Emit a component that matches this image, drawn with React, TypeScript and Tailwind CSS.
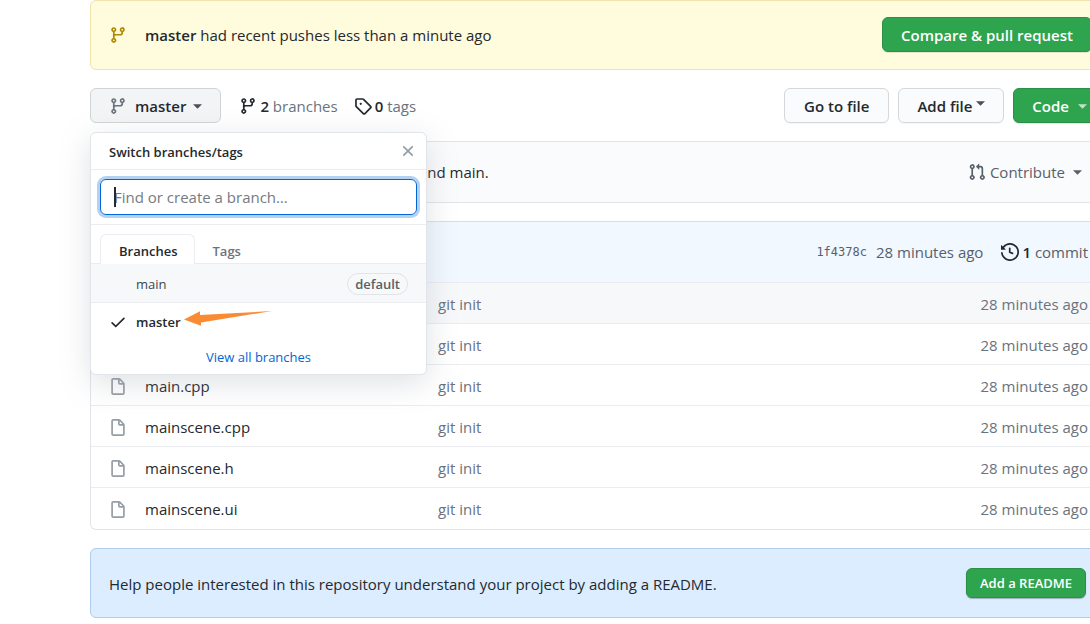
import React from "react";

const ICONS = {
  branch:
    "M11.75 2.5a.75.75 0 100 1.5.75.75 0 000-1.5zm-2.25.75a2.25 2.25 0 113 2.122V6A2.5 2.5 0 0110 8.5H6a1 1 0 00-1 1v1.128a2.251 2.251 0 11-1.5 0V5.372a2.25 2.25 0 111.5 0v1.836A2.492 2.492 0 016 7h4a1 1 0 001-1v-.628A2.25 2.25 0 019.5 3.25zM4.25 12a.75.75 0 100 1.5.75.75 0 000-1.5zM3.5 3.25a.75.75 0 111.5 0 .75.75 0 01-1.5 0z",
  tag: "M2.5 7.775V2.75a.25.25 0 01.25-.25h5.025a.25.25 0 01.177.073l6.25 6.25a.25.25 0 010 .354l-5.025 5.025a.25.25 0 01-.354 0l-6.25-6.25a.25.25 0 01-.073-.177zm-1.5 0V2.75C1 1.784 1.784 1 2.75 1h5.025c.464 0 .91.184 1.238.513l6.25 6.25a1.75 1.75 0 010 2.474l-5.026 5.026a1.75 1.75 0 01-2.474 0l-6.25-6.25A1.75 1.75 0 011 7.775zM6 5a1 1 0 100 2 1 1 0 000-2z",
  pull: "M7.177 3.073L9.573.677A.25.25 0 0110 .854v4.792a.25.25 0 01-.427.177L7.177 3.427a.25.25 0 010-.354zM3.75 2.5a.75.75 0 100 1.5.75.75 0 000-1.5zm-2.25.75a2.25 2.25 0 113 2.122v5.256a2.251 2.251 0 11-1.5 0V5.372A2.25 2.25 0 011.5 3.25zM11 2.5h-1V4h1a1 1 0 011 1v5.628a2.251 2.251 0 101.5 0V5A2.5 2.5 0 0011 2.5zm1 10.25a.75.75 0 111.5 0 .75.75 0 01-1.5 0zM3.75 12a.75.75 0 100 1.5.75.75 0 000-1.5z",
  history:
    "M1.643 3.143L.427 1.927A.25.25 0 000 2.104V5.75c0 .138.112.25.25.25h3.646a.25.25 0 00.177-.427L2.715 4.215a6.5 6.5 0 11-1.18 4.458.75.75 0 10-1.493.154 8.001 8.001 0 101.6-5.684zM7.75 4a.75.75 0 01.75.75v2.992l2.028.812a.75.75 0 01-.557 1.392l-2.5-1A.75.75 0 017 8.25v-3.5A.75.75 0 017.75 4z",
  file: "M3.75 1.5a.25.25 0 00-.25.25v11.5c0 .138.112.25.25.25h8.5a.25.25 0 00.25-.25V6H9.75A1.75 1.75 0 018 4.25V1.5H3.75zm5.75.56v2.19c0 .138.112.25.25.25h2.19L9.5 2.06zM2 1.75C2 .784 2.784 0 3.75 0h5.086c.464 0 .909.184 1.237.513l3.414 3.414c.329.328.513.773.513 1.237v8.086A1.75 1.75 0 0112.25 15h-8.5A1.75 1.75 0 012 13.25V1.75z",
  check:
    "M13.78 4.22a.75.75 0 010 1.06l-7.25 7.25a.75.75 0 01-1.06 0L2.22 9.28a.75.75 0 011.06-1.06L6 10.94l6.72-6.72a.75.75 0 011.06 0z",
  x: "M3.72 3.72a.75.75 0 011.06 0L8 6.94l3.22-3.22a.75.75 0 111.06 1.06L9.06 8l3.22 3.22a.75.75 0 11-1.06 1.06L8 9.06l-3.22 3.22a.75.75 0 01-1.06-1.06L6.94 8 3.72 4.78a.75.75 0 010-1.06z",
};

function Icon({ name, className = "" }: { name: keyof typeof ICONS; className?: string }) {
  return (
    <svg viewBox="0 0 16 16" width="18" height="18" fill="currentColor" aria-hidden="true" className={`shrink-0 ${className}`}>
      <path fillRule="evenodd" d={ICONS[name]} />
    </svg>
  );
}

function Caret({ className = "" }: { className?: string }) {
  return (
    <svg viewBox="0 0 8 4" width="9" height="5" fill="currentColor" aria-hidden="true" className={`shrink-0 ${className}`}>
      <path d="M0 0h8L4 4z" />
    </svg>
  );
}

const files = ["", "", "main.cpp", "mainscene.cpp", "mainscene.h", "mainscene.ui"];

const buttonBase = "flex h-[35px] shrink-0 items-center rounded-md border font-semibold whitespace-nowrap";
const greyButton = `${buttonBase} border-[#d5d8da] bg-[#fafbfc] px-[18px] text-[#24292e] shadow-[0_1px_0_rgba(27,31,35,0.04)]`;
const greenButton = `${buttonBase} border-[#2a8f47] bg-[#2ea44f] px-[18px] text-white shadow-[0_1px_0_rgba(27,31,35,0.1)]`;

function BranchMenu() {
  return (
    <div className="absolute top-11 left-0 z-10 w-[337px] rounded-md border border-[#e1e4e8] bg-white text-[13px] shadow-[0_8px_30px_rgba(149,157,165,0.3)]">
      <div className="flex h-9 items-center justify-between pr-[9px] pl-[18px]">
        <span className="pt-0.5 font-semibold">Switch branches/tags</span>
        <button type="button" aria-label="Close" className="text-[#959da5]">
          <Icon name="x" />
        </button>
      </div>
      <div className="relative border-y border-[#eaecef] px-[9px] py-[9px]">
        <input
          type="text"
          aria-label="Find or create a branch"
          placeholder="Find or create a branch…"
          className="block h-9 w-full rounded-md border border-[#0366d6] px-[13px] text-[15px] shadow-[0_0_0_3px_rgba(3,102,214,0.3)] outline-none placeholder:text-[#757b83]"
        />
        <span className="absolute top-[17px] left-[23px] h-5 w-[2px] bg-[#24292e]" />
      </div>
      <div role="tablist" className="flex items-end px-[9px] pt-[9px] font-semibold shadow-[inset_0_-1px_0_#eaecef]">
        <button type="button" role="tab" aria-selected="true" className="h-[30px] rounded-t-md border border-b-0 border-[#eaecef] bg-white pt-0.5 pr-4 pl-[18px]">
          Branches
        </button>
        <button type="button" role="tab" aria-selected="false" className="h-[30px] px-[18px] pt-1 text-[#6a737d]">
          Tags
        </button>
      </div>
      <a href="#main" className="flex h-[39px] items-center border-b border-[#eaecef] bg-[#f6f8fa] pt-px pr-[18px] pl-[45px] text-[#40464d]">
        <span className="grow">main</span>
        <span className="flex h-[22px] items-center rounded-full border border-[#e1e4e8] px-[7px] font-semibold text-[#586069]">default</span>
      </a>
      <a href="#master" className="flex h-[38px] items-center gap-[9px] pl-[18px] font-semibold">
        <Icon name="check" />
        <span>master</span>
      </a>
      <a href="#branches" className="flex h-[33px] items-center justify-center pb-0.5 text-[#0366d6]">
        View all branches
      </a>
      <svg viewBox="0 0 90 18" width="90" height="18" aria-hidden="true" className="absolute top-[177px] left-[93px]">
        <path d="M0 9.500L16 1.200V5L88 1 17 12.500v3.200z" fill="#fb8a35" />
      </svg>
    </div>
  );
}

export default function App() {
  return (
    <div className="overflow-hidden bg-white font-['Open_Sans',sans-serif] text-[15px] leading-[22px] text-[#24292e]">
      <main className="-mr-[18px] flex flex-col gap-[18px] pb-1.5 pl-[90px]">
        <section className="flex h-[70px] items-center rounded-md border border-[#f0e3ae] bg-[#fffbdd] pr-[15px] pb-px pl-[18px]">
          <Icon name="branch" className="text-[#b08800]" />
          <p className="ml-[18px] grow">
            <strong className="font-semibold">master</strong> had recent pushes less than a minute ago
          </p>
          <button type="button" className={greenButton}>Compare &amp; pull request</button>
        </section>

        <div className="relative flex h-[35px] items-center">
          <button type="button" aria-expanded="true" className={`${buttonBase} border-[#d1d4d7] bg-[#f3f4f6] pr-[18px] pl-[18px]`}>
            <Icon name="branch" className="text-[#6a737d]" />
            <span className="ml-2">master</span>
            <Caret className="mt-px ml-[7px] text-[#4a5056]" />
          </button>
          <a href="#branches" className="ml-[18px] flex items-center gap-[3px] text-[#6a737d]">
            <Icon name="branch" className="text-[#24292e]" />
            <span><strong className="font-semibold text-[#24292e]">2</strong> branches</span>
          </a>
          <a href="#tags" className="ml-4 flex grow items-center gap-[3px] text-[#6a737d]">
            <Icon name="tag" className="text-[#24292e]" />
            <span><strong className="font-semibold text-[#24292e]">0</strong> tags</span>
          </a>
          <div className="flex gap-[9px]">
            <button type="button" className={`${greyButton} px-[19px]`}>Go to file</button>
            <button type="button" className={greyButton}>
              Add file
              <Caret className="mb-1 ml-1 text-[#4a5056]" />
            </button>
            <button type="button" className={`${greenButton} pr-5`}>
              Code
              <Caret className="mt-px ml-[9px] text-[#c0e4ca]" />
            </button>
          </div>
          <BranchMenu />
        </div>

        <section className="flex h-[62px] items-center rounded-md border border-[#e1e4e8] bg-[#fafbfc] pr-[25px] pl-[328px]">
          <p className="grow">and main.</p>
          <button type="button" className="flex items-center text-[#586069]">
            <Icon name="pull" />
            <span className="mr-2 ml-1">Contribute</span>
            <Caret className="mt-px" />
          </button>
        </section>

        <section className="overflow-hidden rounded-md border border-[#e1e4e8] border-t-[#c8e1ff]">
          <header className="flex h-[60px] items-center justify-end bg-[#f1f8ff] pr-[19px] text-[#586069]">
            <a href="#commit" className="mr-[9px] font-['DejaVu_Sans_Mono',monospace] text-[12px]">1f4378c</a>
            <span>28 minutes ago</span>
            <a href="#commits" className="ml-[18px] flex items-center gap-[3px]">
              <Icon name="history" className="text-[#24292e]" />
              <span><strong className="font-semibold text-[#24292e]">1</strong> commit</span>
            </a>
          </header>
          <table className="w-full border-collapse" aria-label="Files">
            <tbody>
              {files.map((file, i) => (
                <tr key={i} className="h-[41px] border-t border-[#eaecef] first:bg-[#f6f8fa]">
                  <td className="w-[54px] pt-1 pl-[18px] text-[#959da5]">
                    <Icon name="file" />
                  </td>
                  <td className="w-[293px] pt-0.5">
                    <a href="#file">{file}</a>
                  </td>
                  <td className="pt-0.5 text-[#6a737d]">git init</td>
                  <td className="pt-0.5 pr-[19px] text-right text-[#6a737d]">28 minutes ago</td>
                </tr>
              ))}
            </tbody>
          </table>
        </section>

        <section className="flex h-[70px] items-center rounded-md border border-[#afcdec] bg-[#dbedff] pr-[21px] pl-[18px]">
          <p className="grow pt-0.5">Help people interested in this repository understand your project by adding a README.</p>
          <button type="button" className="flex h-[30px] items-center rounded-md border border-[#2a8f47] bg-[#2ea44f] px-[13px] text-[13px] font-semibold text-white shadow-[0_1px_1px_rgba(27,31,35,0.3)]">
            Add a README
          </button>
        </section>
      </main>
    </div>
  );
}
